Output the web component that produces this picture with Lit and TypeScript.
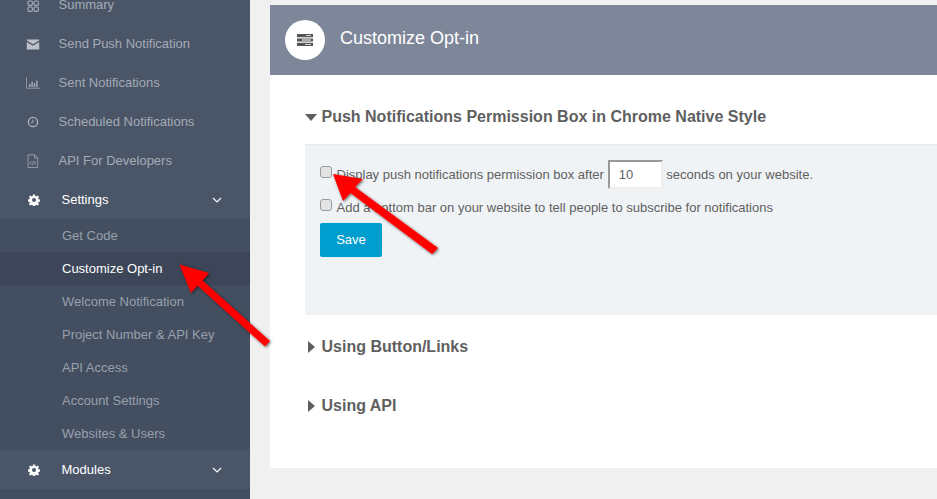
import { LitElement, html, css, svg } from "lit";
import { customElement } from "lit/decorators.js";

const gear = html`<svg class="ic" width="12" height="12" viewBox="0 0 24 24"><path fill="#fff" fill-rule="evenodd" d="M10 1h4l.6 3.2 1.9.8 2.7-1.8 2.8 2.8-1.8 2.7.8 1.9 3 .6v4l-3 .6-.8 1.9 1.8 2.7-2.8 2.8-2.7-1.8-1.9.8-.6 3h-4l-.6-3-1.9-.8-2.7 1.8-2.8-2.8 1.8-2.7-.8-1.9-3-.6v-4l3-.6.8-1.9-1.8-2.7 2.8-2.8 2.7 1.8 1.9-.8zM12 8a4 4 0 1 0 0 8 4 4 0 0 0 0-8z"/></svg>`;
const chevron = html`<svg class="chev" width="10" height="6" viewBox="0 0 10 6"><path d="M1 1l4 4 4-4" fill="none" stroke="#fff" stroke-width="1.1"/></svg>`;

const icons = {
  grid: svg`<g fill="none" stroke="#a9b0ba" stroke-width="1.1"><rect x="2" y="3" width="4.4" height="4.4" rx="1.2"/><rect x="8" y="3" width="4.4" height="4.4" rx="1.2"/><rect x="2" y="9" width="4.4" height="4.4" rx="1.2"/><rect x="8" y="9" width="4.4" height="4.4" rx="1.2"/></g>`,
  mail: svg`<path fill="#bcc1c9" d="M.8 2.5h12.4v.9L7 7.2.8 3.4zM.8 4.9L7 8.7l6.2-3.8v7.6H.8z"/>`,
  chart: svg`<path fill="#a9b0ba" d="M0 1.5h.7v10.3H14.5v.7H0zM3 8h1.4v3H3zM5.4 5.8h1.4V11H5.4zM7.8 7.2h1.4V11H7.8zM10.2 4.4h1.4V11h-1.4z"/>`,
  clock: svg`<g fill="none" stroke="#a9b0ba"><circle cx="7" cy="7" r="4.6" stroke-width="1.4"/><path d="M7 4.4V7.4H5" stroke-width="1"/></g>`,
  code: svg`<g fill="none" stroke="#98a0ac" stroke-width=".9"><path d="M2 .8h6.5l3.2 3.2v9.5H2zM8.5 .8V4h3.2"/><path d="M5.4 7.2L3.9 9l1.5 1.8M8.3 7.2L9.8 9l-1.5 1.8M7.5 6.8L6.3 11.2"/></g>`,
};

@customElement("app-root")
export class AppRoot extends LitElement {
  static styles = css`
    :host { display: block; height: 499px; overflow: hidden; position: relative; background: #f0f0f0;
      font-family: "Liberation Sans", Arial, sans-serif; }
    .page { display: flex; align-items: flex-start; height: 499px; }
    .side { width: 250px; flex: none; height: 514px; margin-top: -15px; background: #4a5568; display: flex; flex-direction: column; }
    .item { height: 39px; display: flex; align-items: center; font-size: 13px; color: #a4abb6; }
    .slot { width: 58.5px; flex: none; display: flex; justify-content: center; padding-left: 6.5px; box-sizing: border-box; }
    .slot svg { display: block; }
    .item.top { color: #fff; }
    .item.top .slot { width: 61.5px; padding-left: 6px; padding-right: 0; justify-content: flex-start; }
    .item.top .slot svg { margin-left: 22px; }
    .item.top .label { flex: 1; }
    .chev { margin-right: 28px; }
    .sub { background: #434e60; display: flex; flex-direction: column; }
    .sub div { height: 33px; line-height: 33px; padding-left: 62px; font-size: 13px; color: #98a0ac; }
    .sub .on { color: #fff; background: #3c4658; }
    .rest { flex: 1; background: #434e60; }
    .main { margin: 5px 0 0 20px; flex: none; width: 700px; background: #fff; height: 463px; }
    .head { height: 70px; background: #7e879a; display: flex; align-items: center; padding-left: 15px; gap: 15px; color: #fff; font-size: 18px; }
    .title { padding-bottom: 3px; }
    .disc { width: 40px; height: 40px; border-radius: 50%; background: #fff; display: flex; align-items: center; justify-content: center; }
    .body { padding: 0 0 0 35px; color: #5f5f5f; }
    h3 { margin: 0; font-size: 16px; font-weight: bold; color: #5f5f5f; display: flex; align-items: center; line-height: 20px; }
    .first { padding-top: 32px; height: 37px; }
    .tri { width: 16.5px; flex: none; display: flex; }
    .tri.r { padding-left: 3px; width: 13.5px; }
    .panel { background: #eff3f6; border-top: 1px solid #e8ebee; height: 171px; margin-right: -10px; padding: 15px 0 0 15px; font-size: 13px; color: #5f5f5f; box-sizing: border-box; }
    .row { display: flex; align-items: center; }
    .r1 { height: 30px; position: relative; top: -1px; }
    .r2 { height: 17px; margin-top: 9px; }
    .cb { width: 12px; height: 12px; box-sizing: border-box; border: 1px solid #9c9c9c; border-radius: 3px; background: #e3e3e3; margin: 0 4.5px 0 0; flex: none; position: relative; }
    .r1 .cb { top: -2px; }
    .r2 .cb { top: -3px; }
    .num { width: 55px; height: 29px; box-sizing: border-box; border: 2px solid #eeeeee; border-top-color: #999; border-left-color: #999; background: #fff; margin: 0 3.5px 0 4px; padding-left: 9px; line-height: 26px; font-size: 13px; color: #5f5f5f; }
    .save { width: 62px; height: 34px; margin-top: 7px; padding-bottom: 2px; box-sizing: border-box; background: #009dcf; color: #fff; border-radius: 2px; font-size: 13px; display: flex; align-items: center; justify-content: center; }
    .sec { height: 59px; display: flex; align-items: center; }
    .sec.a { margin-top: 2px; }
    .over { position: absolute; left: 0; top: 0; pointer-events: none; }
  `;

  private tri(open: boolean) {
    return open
      ? html`<span class="tri"><svg width="12" height="7" viewBox="0 0 12 7"><path d="M0 0h12L6 7z" fill="#5f5f5f"/></svg></span>`
      : html`<span class="tri r"><svg width="7" height="12" viewBox="0 0 7 12"><path d="M0 0l7 6-7 6z" fill="#5f5f5f"/></svg></span>`;
  }

  render() {
    const top = [
      ["grid", "Summary"],
      ["mail", "Send Push Notification"],
      ["chart", "Sent Notifications"],
      ["clock", "Scheduled Notifications"],
      ["code", "API For Developers"],
    ] as const;
    const sub = ["Get Code", "Customize Opt-in", "Welcome Notification", "Project Number & API Key", "API Access", "Account Settings", "Websites & Users"];
    return html`
      <div class="page">
        <nav class="side">
          ${top.map(([i, t]) => html`<div class="item"><span class="slot"><svg width="14" height="14" viewBox="0 0 14 14">${icons[i]}</svg></span><span>${t}</span></div>`)}
          <div class="item top"><span class="slot">${gear}</span><span class="label">Settings</span>${chevron}</div>
          <div class="sub">${sub.map((s) => html`<div class=${s === "Customize Opt-in" ? "on" : ""}>${s}</div>`)}</div>
          <div class="item top"><span class="slot">${gear}</span><span class="label">Modules</span>${chevron}</div>
          <div class="rest"></div>
        </nav>
        <main class="main">
          <header class="head">
            <span class="disc"><svg width="16" height="12" viewBox="0 0 16 12"><path fill="#555" d="M0 0h16v3.2H0zM0 4.4h16v3.2H0zM0 8.8h16V12H0z"/><path fill="#fff" d="M9 1.2h5V2H9zM5 5.6h9v.8H5zM8 10h6v.8H8z"/></svg></span>
            <span class="title">Customize Opt-in</span>
          </header>
          <div class="body">
            <div class="first"><h3>${this.tri(true)}Push Notifications Permission Box in Chrome Native Style</h3></div>
            <section class="panel">
              <div class="row r1"><span class="cb"></span>Display push notifications permission box after<span class="num">10</span>seconds on your website.</div>
              <div class="row r2"><span class="cb"></span>Add a bottom bar on your website to tell people to subscribe for notifications</div>
              <div class="save">Save</div>
            </section>
            <div class="sec a"><h3>${this.tri(false)}Using Button/Links</h3></div>
            <div class="sec"><h3>${this.tri(false)}Using API</h3></div>
          </div>
        </main>
      </div>
      <svg class="over" width="937" height="499" viewBox="0 0 937 499">
        <defs><filter id="s" x="-20%" y="-20%" width="140%" height="140%"><feDropShadow dx="1" dy="1" stdDeviation="1.5" flood-color="#000" flood-opacity=".6"/></filter></defs>
        <g fill="#f00" filter="url(#s)">
          <path d="M179.5 264.5L209 273L202.5 280.5L270 341L265 346.5L197.5 285.5L191 293z"/>
          <path d="M333 174L363 179L355 187L438 248L432 254L350.5 193L343 201z"/>
        </g>
      </svg>`;
  }
}
